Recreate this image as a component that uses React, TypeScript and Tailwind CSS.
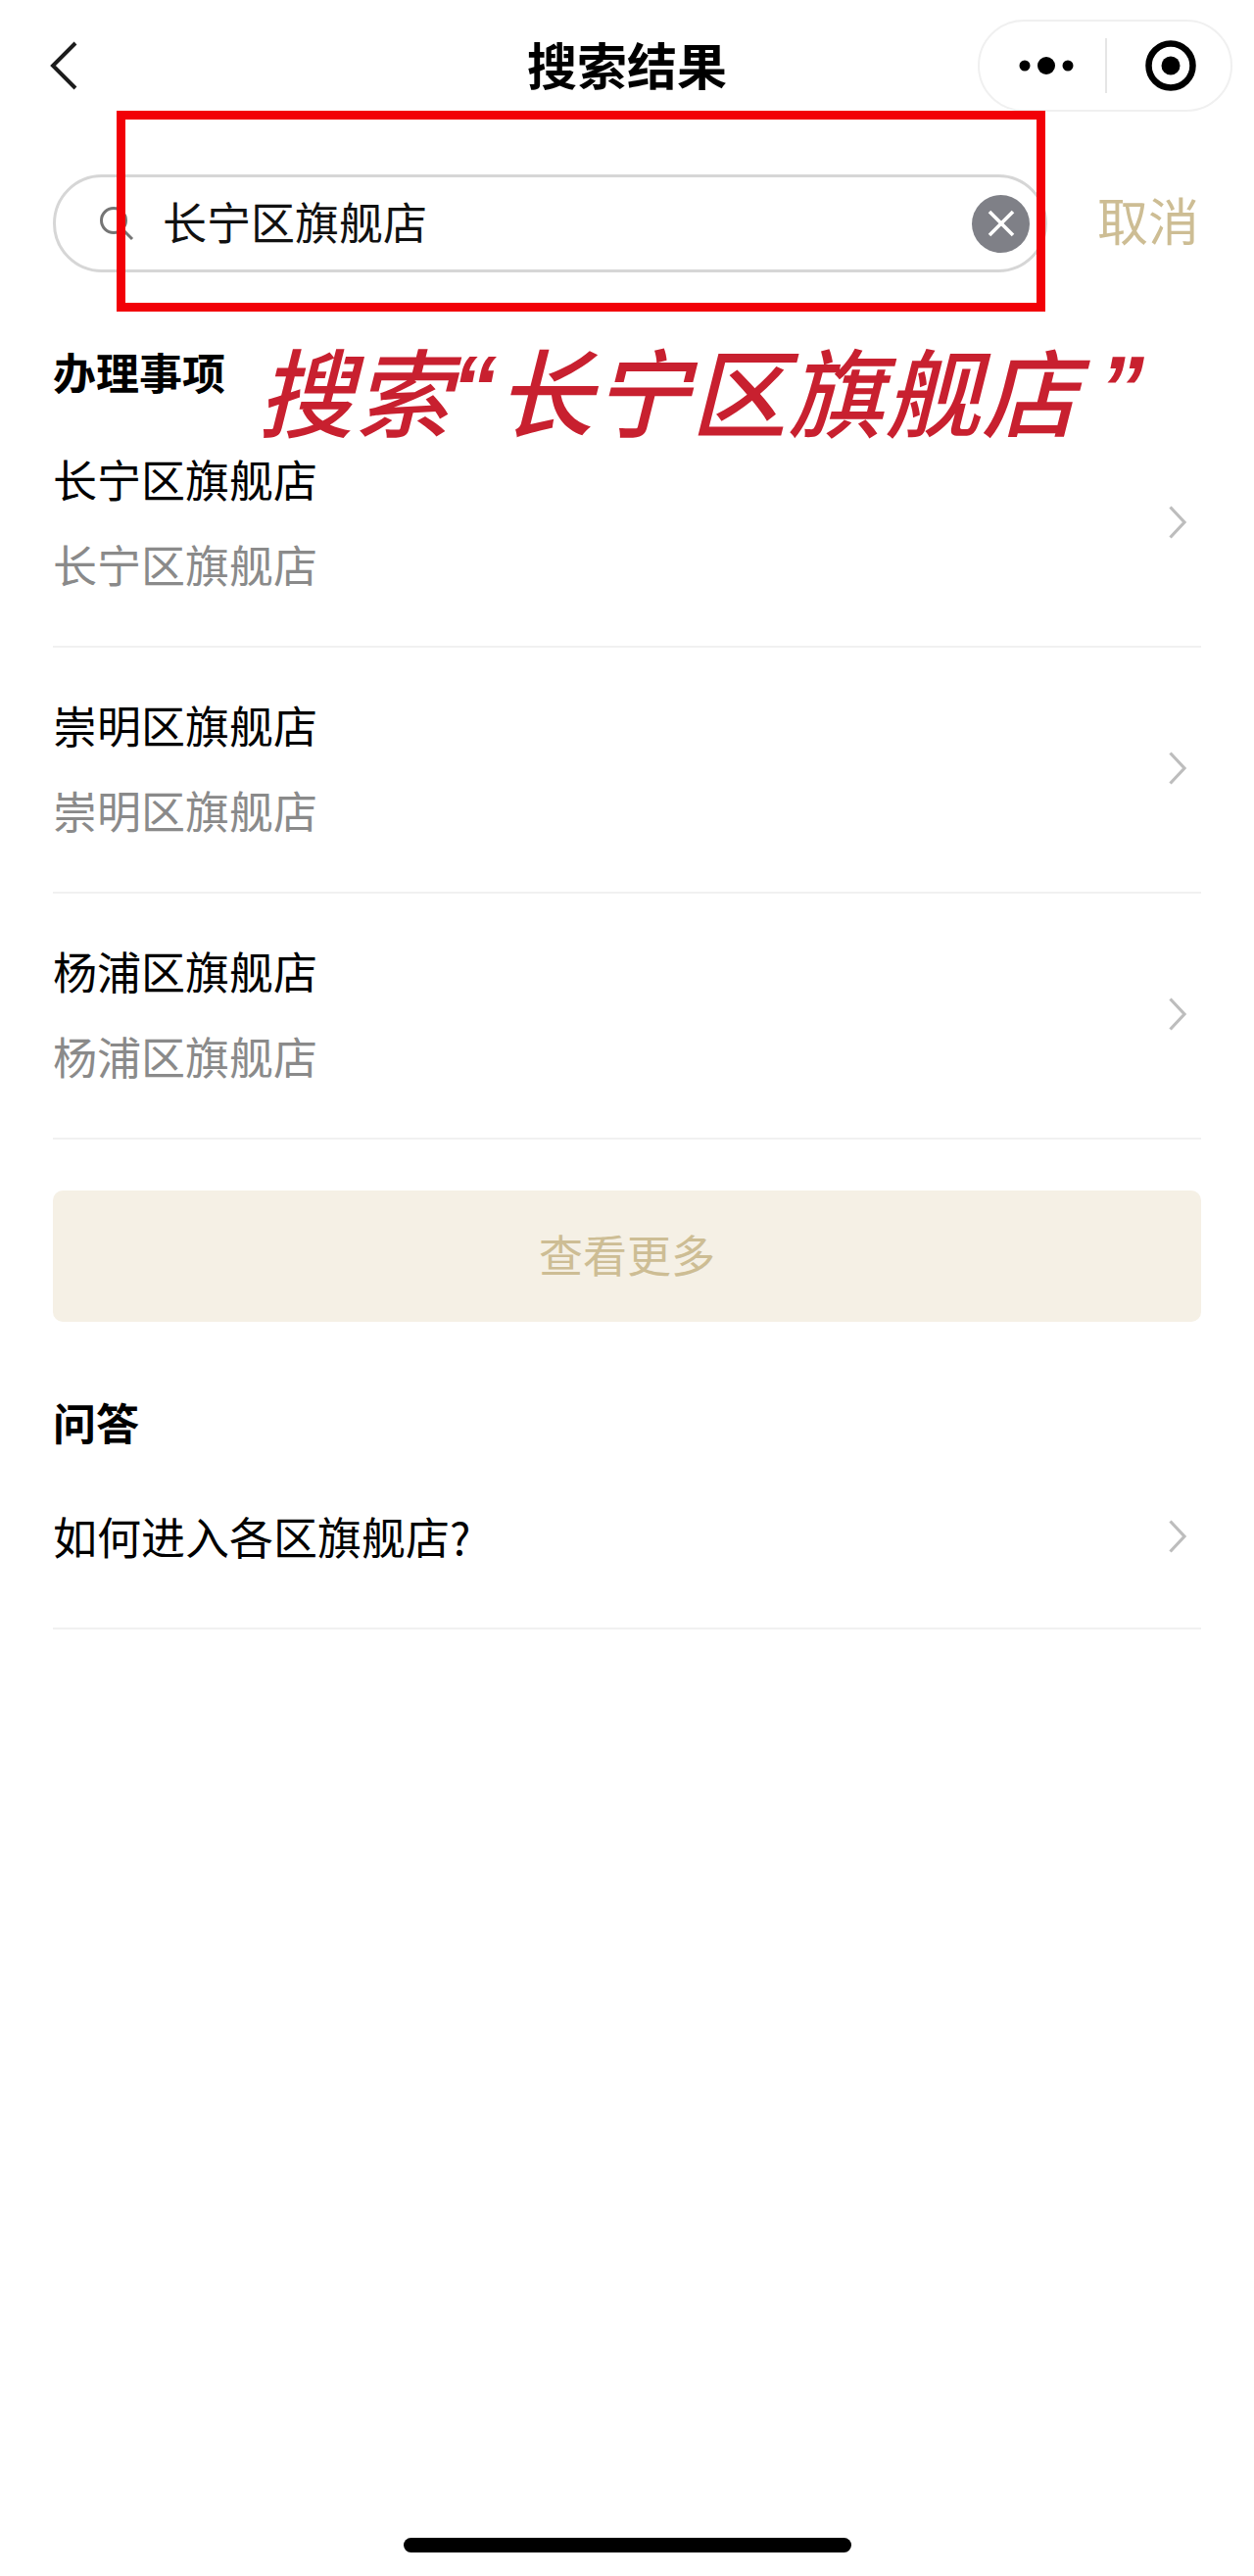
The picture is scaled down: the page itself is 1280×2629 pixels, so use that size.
const FONT = "font-['Noto_Sans_CJK_SC','Noto_Sans',sans-serif]";

function Chevron() {
  return (
    <svg width="20" height="36" viewBox="0 0 20 36" fill="none" className="shrink-0">
      <path d="M2.5 2.5 L17 18 L2.5 33.5" stroke="#bdbdbd" strokeWidth="3.2" />
    </svg>
  );
}

function ResultRow({ title }: { title: string }) {
  return (
    <div className="flex h-[251px] items-center justify-between border-b-2 border-[#f1f1f1] pb-[4px] pr-[14px]">
      <div className="flex flex-col">
        <div className="text-[45px] leading-[60px] text-black">{title}</div>
        <div className="mt-[27px] text-[45px] leading-[60px] text-[#8a8a8a]">{title}</div>
      </div>
      <Chevron />
    </div>
  );
}

export default function App() {
  return (
    <div className={`relative h-[2629px] w-[1280px] overflow-hidden bg-white ${FONT}`}>
      {/* Navigation bar */}
      <header className="grid grid-cols-[1fr_auto_1fr] items-center pt-[20px]">
        <div className="pl-[50px]">
          <svg width="30" height="52" viewBox="0 0 30 52" fill="none">
            <path d="M27 3 L4 26 L27 49" stroke="#1c1c1c" strokeWidth="4" />
          </svg>
        </div>
        <h1 className="pb-[3px] text-[51px] font-bold leading-[91px] text-black">搜索结果</h1>
        <div className="flex justify-end pr-[22px]">
          <div className="flex h-[94px] w-[260px] items-center rounded-full border-2 border-[#f0f0f0]">
            <svg width="56" height="20" viewBox="0 0 56 20" className="ml-[40px]">
              <circle cx="6" cy="10" r="5.5" fill="#000" />
              <circle cx="28" cy="10" r="9" fill="#000" />
              <circle cx="50" cy="10" r="5.5" fill="#000" />
            </svg>
            <div className="ml-[32px] h-[56px] w-[2px] bg-[#e6e6e6]" />
            <svg width="54" height="54" viewBox="0 0 54 54" className="ml-[38px]">
              <circle cx="27" cy="27" r="22.5" fill="none" stroke="#000" strokeWidth="6.5" />
              <circle cx="27" cy="27" r="9.5" fill="#000" />
            </svg>
          </div>
        </div>
      </header>

      {/* Search row */}
      <div className="mt-[64px] flex items-center pl-[54px]">
        <div className="flex h-[100px] w-[1015px] items-center rounded-full border-[3px] border-[#d6d6d6] pl-[44px] pr-[15px]">
          <svg width="36" height="36" viewBox="0 0 36 36" fill="none" className="shrink-0">
            <circle cx="15" cy="15" r="12.5" stroke="#757575" strokeWidth="3" />
            <path d="M24 24 L34 34" stroke="#757575" strokeWidth="3" />
          </svg>
          <span className="ml-[29px] flex-1 pb-[4px] text-[45px] leading-[60px] text-[#111]">长宁区旗舰店</span>
          <div className="flex h-[59px] w-[59px] items-center justify-center rounded-full bg-[#7f8087]">
            <svg width="28" height="28" viewBox="0 0 28 28" fill="none">
              <path d="M2 2 L26 26 M26 2 L2 26" stroke="#fff" strokeWidth="3.6" />
            </svg>
          </div>
        </div>
        <span className="ml-[51px] pb-[9px] text-[52px] leading-[60px] text-[#cdbd94]">取消</span>
      </div>

      {/* Results */}
      <main className="mx-[54px] mt-[71px]">
        <h2 className="w-fit text-[44px] font-bold leading-[60px] text-black">办理事项</h2>
        <div className="mt-[1px]">
          <ResultRow title="长宁区旗舰店" />
          <ResultRow title="崇明区旗舰店" />
          <ResultRow title="杨浦区旗舰店" />
        </div>

        <button className="mt-[52px] flex h-[134px] w-full items-center justify-center rounded-[10px] bg-[#f5f0e5] pb-[4px] text-[45px] text-[#cdbd94]">
          查看更多
        </button>

        <h2 className="mt-[72px] w-fit text-[44px] font-bold leading-[60px] text-black">问答</h2>
        <div className="mt-[35px] flex h-[147px] items-start justify-between border-b-2 border-[#f1f1f1] pr-[14px] pt-[22px]">
          <span className="text-[45px] leading-[60px] text-black">如何进入各区旗舰店?</span>
          <span className="pt-[12px]"><Chevron /></span>
        </div>
      </main>

      {/* Annotation overlays */}
      <div className="absolute left-[119px] top-[113px] h-[205px] w-[948px] border-[9px] border-[#f20007]" />
      <div className="absolute left-[263px] top-[336px] flex whitespace-nowrap text-[98px] font-medium italic leading-[120px] text-[#c8202f]">
        <span className="tracking-[1px]">搜索</span>
        <span className="font-['Liberation_Sans'] text-[92px] font-bold">“</span>
        <span className="tracking-[1px]">长宁区旗舰店</span>
        <span className="ml-[21px] font-['Liberation_Sans'] text-[92px] font-bold">”</span>
      </div>

      {/* Home indicator */}
      <div className="absolute bottom-[24px] left-[412px] h-[15px] w-[457px] rounded-full bg-black" />
    </div>
  );
}
